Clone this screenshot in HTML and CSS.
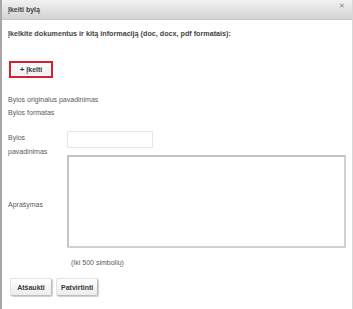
FILE: index.html
```html
<!DOCTYPE html>
<html lang="lt">
  <head>
    <meta charset="UTF-8" />
    <title>Įkelti bylą</title>
    <link rel="stylesheet" href="styles.css">
  </head>
  <body>
    <div class="dialog">
      <div class="dialog-title">
        <span>Įkelti bylą</span>
        <span class="close">✕</span>
      </div>

      <div class="dialog-body">
        <p class="intro">Įkelkite dokumentus ir kitą informaciją (doc, docx, pdf formatais):</p>

        <div class="upload">
          <button type="button" class="btn btn-upload"><b class="plus">+</b> Įkelti</button>
        </div>

        <div class="file-info">
          <p>Bylos originalus pavadinimas</p>
          <p>Bylos formatas</p>
        </div>

        <form class="file-form">
          <div class="row">
            <label for="fileName">Bylos<br>pavadinimas</label>
            <input id="fileName" type="text" class="name-input">
          </div>
          <div class="row row-desc">
            <label for="desc">Aprašymas</label>
            <textarea id="desc"></textarea>
          </div>
          <p class="hint">(Iki 500 simbolių)</p>

          <div class="actions">
            <button type="button" class="btn">Atšaukti</button>
            <button type="button" class="btn">Patvirtinti</button>
          </div>
        </form>
      </div>
    </div>
  </body>
</html>
```

FILE: styles.css
```css
* {
  padding: 0;
  margin: 0;
  box-sizing: border-box;
}
body {
  font-family: "Liberation Sans", Arial, sans-serif;
  font-size: 7px;
  color: #5a5a5a;
  background-color: #fff;
}

.dialog {
  height: 309px;
  border-left: 2px solid #a8a8a8;
  border-right: 1px solid #d8d8d8;
}

.dialog-title {
  height: 20px;
  display: flex;
  align-items: center;
  justify-content: space-between;
  padding: 0 6px 0 6px;
  background: linear-gradient(#f2f2f2, #d3d3d3);
  border-bottom: 1px solid #c8c8c8;
  font-weight: bold;
  color: #444;
}

.close {
  align-self: flex-start;
  margin-top: 2px;
  margin-right: 1px;
  font-size: 7px;
  color: #888;
  font-weight: normal;
}

.dialog-body {
  padding: 9px 6px 0 6px;
}

.intro {
  font-weight: bold;
  font-size: 7.2px;
  color: #444;
  line-height: 9px;
}

.upload {
  margin-top: 23px;
  margin-left: 1px;
  width: 44px;
  height: 17px;
  border: 2px solid #d42030;
  padding: 1px;
}

.btn {
  font-family: "Liberation Sans", Arial, sans-serif;
  font-size: 7px;
  font-weight: bold;
  color: #3a3a3a;
  background: linear-gradient(#ffffff, #ececec);
  border: 1px solid #e2e2e2;
  border-right-color: #bdbdbd;
  border-bottom-color: #bdbdbd;
  border-radius: 2px;
  box-shadow: 1px 1px 1px #cfcfcf;
  height: 18px;
  padding: 0 4px;
  min-width: 42px;
}

.btn-upload {
  width: 100%;
  height: 100%;
  min-width: 0;
  box-shadow: none;
  border: none;
  background: linear-gradient(#fbfbfb, #efefef);
}

.plus {
  font-size: 8px;
  color: #333;
}

.file-info {
  margin-top: 15px;
}

.file-info p {
  line-height: 13px;
}

.file-form {
  margin-top: 12px;
}

.row {
  display: flex;
  align-items: flex-start;
}

.row label {
  width: 59px;
  height: 17px;
  line-height: 14px;
}

.name-input {
  width: 86px;
  height: 17px;
  border: 1px solid #e6e6e6;
}

.row-desc {
  margin-top: 7px;
  align-items: center;
}

.row-desc label {
  height: auto;
  padding-top: 6px;
}

textarea {
  width: 281px;
  height: 93px;
  border: 2px solid #c4c4c4;
  border-right-color: #d0d0d0;
  border-bottom-color: #d0d0d0;
  resize: none;
}

.hint {
  margin-top: 10px;
  margin-left: 63px;
  line-height: 9px;
}

.actions {
  margin-top: 11px;
  margin-left: 2px;
  display: flex;
  gap: 4px;
}
```
